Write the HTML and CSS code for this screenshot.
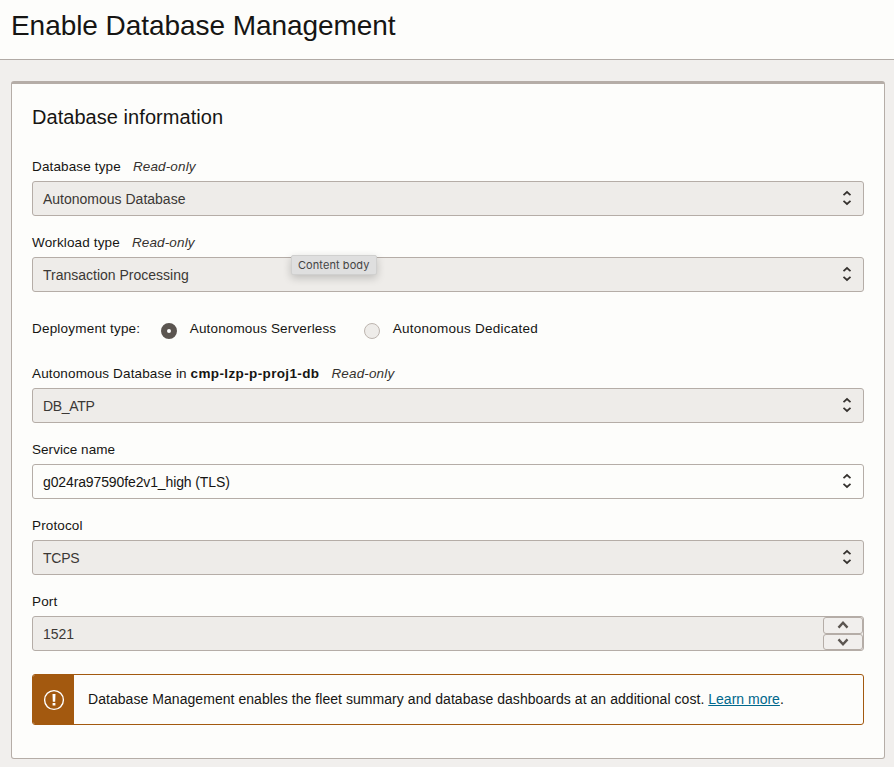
FILE: index.html
```html
<!DOCTYPE html>
<html lang="en">
<head>
<meta charset="utf-8">
<title>Enable Database Management</title>
<link rel="stylesheet" href="styles.css">
</head>
<body>
<svg class="defs" width="0" height="0" aria-hidden="true">
  <symbol id="updown" viewBox="0 0 10 16"><path d="M1.500 5.200 5 2l3.500 3.200M1.500 10.800 5 14l3.500-3.200"/></symbol>
</svg>
<header class="page-header"><h1><span class="title">Enable Database Management</span></h1></header>
<main class="panel">
  <h2><span class="subtitle">Database information</span></h2>
  <div class="field">
    <div class="label"><span class="l-dbtype">Database type</span><em>Read-only</em></div>
    <div class="box"><span class="v-dbtype">Autonomous Database</span><svg class="updown"><use href="#updown"/></svg></div>
  </div>
  <div class="field">
    <div class="label"><span class="l-workload">Workload type</span><em>Read-only</em></div>
    <div class="box"><span class="v-workload">Transaction Processing</span><svg class="updown"><use href="#updown"/></svg></div>
    <div class="tooltip"><span>Content body</span></div>
  </div>
  <div class="radios">
    <span class="group-label">Deployment type:</span>
    <i class="radio checked"></i><span class="opt-serverless">Autonomous Serverless</span>
    <i class="radio second"></i><span class="opt-dedicated">Autonomous Dedicated</span>
  </div>
  <div class="field">
    <div class="label"><span class="l-adb">Autonomous Database in <b>cmp-lzp-p-proj1-db</b></span><em>Read-only</em></div>
    <div class="box"><span class="v-adb">DB_ATP</span><svg class="updown"><use href="#updown"/></svg></div>
  </div>
  <div class="field">
    <div class="label"><span class="l-service">Service name</span></div>
    <div class="box enabled"><span class="v-service">g024ra97590fe2v1_high (TLS)</span><svg class="updown"><use href="#updown"/></svg></div>
  </div>
  <div class="field">
    <div class="label"><span class="l-protocol">Protocol</span></div>
    <div class="box"><span class="v-protocol">TCPS</span><svg class="updown"><use href="#updown"/></svg></div>
  </div>
  <div class="field">
    <div class="label"><span class="l-port">Port</span></div>
    <div class="box number"><span class="v-port">1521</span>
      <div class="stepper">
        <div class="step"><svg viewBox="0 0 12 8"><path d="M1.500 6.600 6 1.800l4.500 4.800"/></svg></div>
        <div class="step"><svg viewBox="0 0 12 8"><path d="M1.500 1.400 6 6.200l4.500-4.800"/></svg></div>
      </div>
    </div>
  </div>
  <div class="alert">
    <div class="alert-icon"><svg viewBox="0 0 22 22"><circle cx="11" cy="11" r="9.400"/><path d="M9.500 5h3l-.3 7.800H9.800zM9.600 14h2.800v2.500H9.600z"/></svg></div>
    <p><span class="message">Database Management enables the fleet summary and database dashboards at an additional cost. <a>Learn more</a>.</span></p>
  </div>
</main>
</body>
</html>
```
FILE: styles.css
```css
* { box-sizing: border-box; }
body {
  margin: 0;
  height: 767px;
  overflow: hidden;
  background: #f1efed;
  color: #161513;
  font: 13.5px/16px "Liberation Sans", Arial, sans-serif;
  white-space: nowrap;
}
.defs { display: block; position: absolute; }
.page-header {
  height: 60px;
  padding: 8px 0 0 11px;
  background: #fdfdfb;
  border-bottom: 1px solid #b1aaa5;
}
h1 { margin: 0; font-size: 28px; line-height: 35px; font-weight: 400; letter-spacing: -.06px; }
.panel {
  margin: 21px 9px 0 11px;
  height: 678px;
  padding: 19px 20px 0;
  background: #fdfdfb;
  border: 1px solid #b5ada7;
  border-top-width: 3px;
  border-radius: 3px;
}
h2 { margin: 0 0 28px; font-size: 20px; line-height: 28px; font-weight: 400; letter-spacing: .05px; }
.field { position: relative; margin-bottom: 19px; }
.label { display: flex; height: 16px; margin-bottom: 6px; letter-spacing: .14px; }
.label em { margin-left: 12px; color: #35322f; }
.l-adb b { letter-spacing: .37px; }
.l-service { letter-spacing: .04px; }
.box {
  display: flex;
  align-items: center;
  justify-content: space-between;
  height: 35px;
  padding: 1px 11px 0 10px;
  border: 1px solid #b5ada7;
  border-radius: 3px;
  background: #eeece9;
  color: #3b3835;
  font-size: 14px;
}
.box.enabled { background: #fdfdfb; color: #161513; }
.v-adb { letter-spacing: -.33px; }
.v-service { letter-spacing: -.12px; }
.v-protocol { letter-spacing: -.25px; }
.updown { width: 10px; height: 16px; margin-top: -2px; fill: none; stroke: #35312e; stroke-width: 1.7; }
.tooltip {
  position: absolute;
  left: 259px;
  top: 20px;
  width: 86px;
  height: 20px;
  padding: 0 0 0 6px;
  border: 1px solid #d0d0cf;
  border-radius: 2px;
  background: #dfdfdf;
  box-shadow: 0 3px 8px #0003;
  color: #444;
  font: 11px/18px Inter, sans-serif;
  letter-spacing: .08px;
}
.radios { display: flex; align-items: center; height: 16px; margin: 29px 0; letter-spacing: .15px; }
.group-label { letter-spacing: .2px; }
.opt-dedicated { letter-spacing: .25px; }
.radio {
  width: 16px;
  height: 16px;
  margin: 4px 12.5px 0 21px;
  border: 1px solid #bdb5af;
  border-radius: 50%;
  background: #eeece9;
}
.radio.second { margin-left: 28px; }
.radio.checked { border: 6px solid #5b5550; background: #fff; }
.number { padding: 0 0 0 10px; }
.stepper { display: flex; flex-direction: column; align-self: stretch; width: 40px; }
.step {
  display: flex;
  flex: 1;
  align-items: center;
  justify-content: center;
  border: 1px solid #b5ada7;
  border-radius: 3px;
  background: #f1efed;
}
.step svg { width: 12px; height: 8px; fill: none; stroke: #5b5550; stroke-width: 2.4; }
.alert {
  display: flex;
  height: 51px;
  margin-top: 23px;
  border: 1px solid #a3590f;
  border-radius: 3px;
  overflow: hidden;
}
.alert-icon { display: flex; align-items: center; justify-content: center; width: 41px; padding-left: 1px; background: #a3590f; }
.alert-icon svg { width: 22px; height: 22px; margin-top: 1px; stroke: #fff; fill: none; stroke-width: 1.4; }
.alert-icon path { fill: #fff; stroke: none; }
.alert p { margin: 0; padding: 16px 0 0 14px; font-size: 14px; letter-spacing: .05px; }
.alert a { color: #00688c; text-decoration: underline; letter-spacing: 0; }
```
